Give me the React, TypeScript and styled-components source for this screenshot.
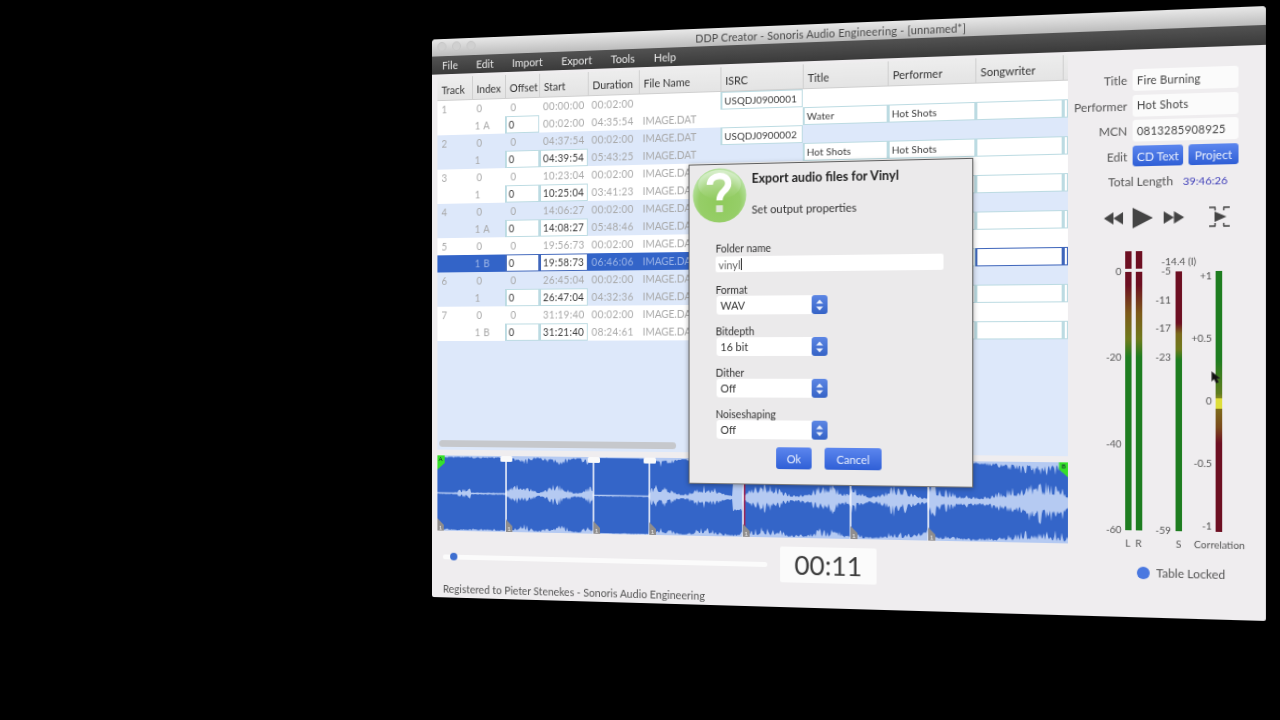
import React from "react";
import styled, { createGlobalStyle } from "styled-components";

const WIN_W = 836;
const WIN_H = 586;

// the whole window is a flat page, tilted onto this quad of the screen
function quadMatrix(w: number, h: number, q: number[][]) {
  const [[x0, y0], [x1, y1], [x2, y2], [x3, y3]] = q;
  const dx1 = x1 - x2, dx2 = x3 - x2, sx = x0 - x1 + x2 - x3;
  const dy1 = y1 - y2, dy2 = y3 - y2, sy = y0 - y1 + y2 - y3;
  const den = dx1 * dy2 - dx2 * dy1;
  const g = (sx * dy2 - dx2 * sy) / den;
  const k = (dx1 * sy - sx * dy1) / den;
  const a = x1 - x0 + g * x1, b = x3 - x0 + k * x3;
  const d = y1 - y0 + g * y1, e = y3 - y0 + k * y3;
  return `matrix3d(${[a / w, d / w, 0, g / w, b / h, e / h, 0, k / h, 0, 0, 1, 0, x0, y0, 0, 1]
    .map((n) => n.toFixed(7))
    .join(",")})`;
}

const TILT = quadMatrix(WIN_W, WIN_H, [[432, 39.5], [1266, 6], [1266, 621], [432, 597]]);
const FONT = `Lato, "Noto Sans", sans-serif`;
const COLUMNS = "38.5px 36px 37px 52px 54px 85px 84px 85px 86px 84px 5px";

const Global = createGlobalStyle`
  html, body { margin: 0; height: 100%; background: #000; overflow: hidden; }
  #root { height: 100%; }
`;

const Page = styled.div`
  width: 1280px;
  height: 720px;
  background: #000;
  overflow: hidden;
`;

const AppWindow = styled.div`
  position: relative;
  width: ${WIN_W}px;
  height: ${WIN_H}px;
  transform-origin: 0 0;
  transform: ${TILT};
  background: #efedef;
  border-radius: 4px 4px 2px 2px;
  overflow: hidden;
  display: flex;
  flex-direction: column;
  font-family: ${FONT};
  color: #444;
  filter: blur(0.3px);
`;

const TitleBar = styled.div`
  position: relative;
  height: 18px;
  background: linear-gradient(#e8e8e8, #bcbcbc);
  display: flex;
  align-items: center;
  justify-content: center;
  font-size: 11px;
  color: #4a4a4a;
  letter-spacing: 0.15px;
`;

const Lights = styled.div`
  position: absolute;
  left: 6px;
  top: 3px;
  display: flex;
  gap: 6px;
`;

const Light = styled.span`
  width: 10px;
  height: 10px;
  border-radius: 50%;
  background: #d0d0d0;
  border: 1px solid #c6c6c6;
  box-sizing: border-box;
`;

const MenuBar = styled.div`
  height: 19px;
  background: linear-gradient(#525252, #3a3a3a);
  display: flex;
  align-items: center;
  gap: 20px;
  padding-left: 11px;
  font-size: 11.2px;
  color: #e8e8e8;
`;

const Body = styled.div`
  flex: 1;
  display: flex;
  min-height: 0;
`;

const LeftColumn = styled.div`
  width: 652px;
  padding: 3px 0 0 5.5px;
  box-sizing: border-box;
  display: flex;
  flex-direction: column;
`;

const TablePane = styled.div`
  position: relative;
  height: 391px;
  background: #dde8fa;
`;

const HeaderRow = styled.div`
  display: grid;
  grid-template-columns: ${COLUMNS};
  height: 25px;
  background: linear-gradient(#ededed, #e4e4e4);
  border-bottom: 1px solid #cfcfcf;
  box-sizing: border-box;
`;

const HeaderCell = styled.div`
  display: flex;
  align-items: center;
  padding: 3px 0 0 4px;
  font-size: 11px;
  color: #333;
  border-left: 1px solid #cfcfcf;
  &:first-child { border-left: 0; padding-left: 5px; }
`;

const Row = styled.div<{ $tone: "white" | "blue" }>`
  display: grid;
  grid-template-columns: ${COLUMNS};
  height: 18px;
  background: ${(p) => (p.$tone === "white" ? "#fff" : "#dde8fa")};
`;

const Cell = styled.div<{ $selected?: boolean; $indent?: number; $name?: boolean }>`
  display: flex;
  align-items: center;
  padding-left: ${(p) => p.$indent ?? 4}px;
  font-size: 10.5px;
  letter-spacing: ${(p) => (p.$name ? 0 : 0.35)}px;
  color: #a8a8a8;
  white-space: nowrap;
  overflow: hidden;
  ${(p) => p.$selected && "background: #3364c8; color: #9db5e6;"}
`;

const Box = styled.div<{ $selected?: boolean; $code?: boolean }>`
  display: flex;
  align-items: center;
  padding-left: 2px;
  font-size: ${(p) => (p.$code ? 10 : 10.5)}px;
  letter-spacing: ${(p) => (p.$code ? 0.1 : 0.3)}px;
  color: #3a3a3a;
  background: #fff;
  white-space: nowrap;
  border: 1px solid ${(p) => (p.$selected ? "#3f66bb" : "#bcdbe2")};
  border-left-width: 2px;
  box-sizing: border-box;
`;

const Scrollbar = styled.div`
  position: absolute;
  left: 2px;
  top: 381px;
  width: 254px;
  height: 7px;
  border-radius: 4px;
  background: #c6c8cc;
`;

const WaveWrap = styled.div`
  margin-top: 6px;
  height: 79px;
`;

const WaveSvg = styled.svg`
  display: block;
  width: 646.5px;
  height: 79px;
`;

const TimeRow = styled.div`
  margin-top: 9px;
  display: flex;
  align-items: center;
  padding-left: 6.5px;
  gap: 13px;
`;

const Slider = styled.div`
  position: relative;
  width: 344px;
  height: 5px;
  border-radius: 3px;
  background: #fbfbfb;
`;

const Thumb = styled.span`
  position: absolute;
  left: 8px;
  top: -1.5px;
  width: 8px;
  height: 8px;
  border-radius: 50%;
  background: #3e6fd0;
`;

const TimeBox = styled.div`
  width: 97px;
  height: 36px;
  background: #fbfbfb;
  border-radius: 2px;
  display: flex;
  align-items: center;
  justify-content: center;
  font-size: 26.5px;
  color: #3c3c3c;
`;

const StatusText = styled.div`
  margin-top: 9px;
  padding-left: 6.5px;
  font-size: 11.1px;
  color: #555;
`;

const SidePanel = styled.div`
  flex: 1;
  padding-top: 19px;
  display: flex;
  flex-direction: column;
`;

const FormGrid = styled.div`
  display: grid;
  grid-template-columns: 56px 98px;
  column-gap: 5px;
  row-gap: 3.5px;
  grid-auto-rows: 21px;
  align-items: center;
`;

const FormLabel = styled.div`
  text-align: right;
  font-size: 11.3px;
  color: #555;
  white-space: nowrap;
`;

const FormInput = styled.div`
  height: 21px;
  background: #fbfbfb;
  border-radius: 3px;
  display: flex;
  align-items: center;
  padding-left: 4px;
  font-size: 10.5px;
  letter-spacing: 0.25px;
  color: #444;
`;

const EditButtons = styled.div`
  display: flex;
  gap: 5px;
`;

const BlueButton = styled.div<{ $w: number; $h: number }>`
  width: ${(p) => p.$w}px;
  height: ${(p) => p.$h}px;
  border-radius: 3px;
  background: linear-gradient(#5c86ee, #2f5fd6);
  color: #e9effd;
  font-size: 11.2px;
  display: flex;
  align-items: center;
  justify-content: center;
`;

const TotalRow = styled.div`
  margin-top: 7px;
  padding-left: 38px;
  display: flex;
  gap: 9px;
  font-size: 11.3px;
  color: #555;
`;

const TotalValue = styled.span`
  color: #3b3bb8;
  font-size: 10.4px;
  line-height: 14px;
`;

const Transport = styled.div`
  margin-top: 18px;
  padding-left: 34px;
  display: flex;
  align-items: center;
  height: 20px;
  color: #444;
`;

const TransportIcon = styled.svg<{ $gap: number }>`
  margin-left: ${(p) => p.$gap}px;
  fill: currentColor;
  display: block;
`;

const MeterRow = styled.div`
  margin-top: 22.5px;
  padding-left: 28.5px;
  display: flex;
  align-items: flex-start;
`;

const ScaleColumn = styled.div<{ $w: number; $gap: number; $inset?: boolean }>`
  width: ${(p) => p.$w}px;
  margin-right: ${(p) => p.$gap}px;
  height: ${(p) => (p.$inset ? 250 : 260)}px;
  margin-top: ${(p) => (p.$inset ? 20 : 15)}px;
  display: flex;
  flex-direction: column;
  justify-content: space-between;
  align-items: flex-end;
  font-size: 9.5px;
  line-height: 10px;
  color: #555;
`;

const ScaleStackEnd = styled.span`
  margin-top: auto;
`;

const ScaleStack = styled.span`
  height: 27.5px;
`;

const MeterColumn = styled.div<{ $offset?: number }>`
  width: 6px;
  margin-left: ${(p) => p.$offset ?? 0}px;
  display: flex;
  flex-direction: column;
  align-items: center;
  font-size: 9.5px;
  color: #555;
  white-space: nowrap;
`;

const MeterHead = styled.div`
  height: 20px;
  display: flex;
  align-items: center;
`;

const ClipBox = styled.div`
  width: 6px;
  height: 16.5px;
  margin-bottom: 3.5px;
  background: #6d0f22;
`;

const Bar = styled.div<{ $fill: string }>`
  width: 6px;
  height: 250px;
  background: ${(p) => p.$fill};
`;

const MeterFoot = styled.div`
  margin-top: 8px;
  line-height: 10px;
`;

const LockRow = styled.div`
  margin-top: 16px;
  padding-left: 65px;
  display: flex;
  align-items: center;
  gap: 6px;
  font-size: 11.3px;
  color: #555;
`;

const LockDot = styled.span`
  width: 12px;
  height: 12px;
  border-radius: 50%;
  background: #4a78e0;
`;

const Cursor = styled.svg`
  position: absolute;
  left: 785.5px;
  top: 348px;
`;

const Dialog = styled.div`
  position: absolute;
  left: 275px;
  top: 138px;
  width: 286px;
  height: 325px;
  box-sizing: border-box;
  background: #ebeaeb;
  border: 1px solid #5f5f5f;
  border-bottom-color: #777;
  box-shadow: 0 1px 5px rgba(0, 0, 0, 0.35);
  padding: 3px 0 0 3px;
  display: flex;
  flex-direction: column;
`;

const DialogHead = styled.div`
  display: flex;
  height: 56px;
`;

const DialogHeadText = styled.div`
  margin-left: 5px;
  display: flex;
  flex-direction: column;
  padding-top: 4px;
`;

const DialogTitle = styled.div`
  font-size: 12.6px;
  font-weight: 700;
  color: #222;
  line-height: 16px;
`;

const DialogSub = styled.div`
  margin-top: 15px;
  font-size: 11.3px;
  color: #333;
  line-height: 16px;
`;

const FieldList = styled.div`
  margin: 21px 0 0 24px;
  display: flex;
  flex-direction: column;
`;

const Field = styled.div`
  height: 42px;
  display: flex;
  flex-direction: column;
`;

const FieldLabel = styled.div`
  font-size: 10.5px;
  line-height: 11px;
  color: #333;
`;

const TextInput = styled.div`
  margin-top: 2px;
  width: 229px;
  height: 16px;
  background: #fff;
  border-radius: 2px;
  display: flex;
  align-items: center;
  padding-left: 3px;
  box-sizing: border-box;
  font-size: 11px;
  color: #666;
`;

const Caret = styled.span`
  width: 1px;
  height: 12px;
  background: #222;
`;

const SelectBox = styled.div`
  margin: 0 0 0 1px;
  width: 113px;
  height: 19px;
  background: #fff;
  border-radius: 3px;
  display: flex;
  align-items: center;
  justify-content: space-between;
  padding-left: 4px;
  box-sizing: border-box;
  font-size: 11px;
  color: #333;
`;

const Stepper = styled.span`
  width: 16px;
  height: 19px;
  border-radius: 3px;
  background: linear-gradient(#5c86e4, #3563c6);
  display: flex;
  align-items: center;
  justify-content: center;
`;

const DialogButtons = styled.div`
  margin: -4px 0 0 86px;
  display: flex;
  gap: 13px;
`;

type TrackRow = {
  track: string;
  startA: string;
  lenA: string;
  fileA: string;
  isrc?: string;
  index: string;
  startB: string;
  lenB: string;
  title?: string;
  performer?: string;
};

const TRACKS: TrackRow[] = [
  { track: "1", startA: "00:00:00", lenA: "00:02:00", fileA: "", isrc: "USQDJ0900001", index: "1 A", startB: "00:02:00", lenB: "04:35:54", title: "Water", performer: "Hot Shots" },
  { track: "2", startA: "04:37:54", lenA: "00:02:00", fileA: "IMAGE.DAT", isrc: "USQDJ0900002", index: "1", startB: "04:39:54", lenB: "05:43:25", title: "Hot Shots", performer: "Hot Shots" },
  { track: "3", startA: "10:23:04", lenA: "00:02:00", fileA: "IMAGE.DAT", index: "1", startB: "10:25:04", lenB: "03:41:23" },
  { track: "4", startA: "14:06:27", lenA: "00:02:00", fileA: "IMAGE.DAT", index: "1 A", startB: "14:08:27", lenB: "05:48:46" },
  { track: "5", startA: "19:56:73", lenA: "00:02:00", fileA: "IMAGE.DAT", index: "1 B", startB: "19:58:73", lenB: "06:46:06" },
  { track: "6", startA: "26:45:04", lenA: "00:02:00", fileA: "IMAGE.DAT", index: "1", startB: "26:47:04", lenB: "04:32:36" },
  { track: "7", startA: "31:19:40", lenA: "00:02:00", fileA: "IMAGE.DAT", index: "1 B", startB: "31:21:40", lenB: "08:24:61" },
];

const HEADERS = ["Track", "Index", "Offset", "Start", "Duration", "File Name", "ISRC", "Title", "Performer", "Songwriter", ""];

function TrackRows({ t, n }: { t: TrackRow; n: number }) {
  const tone = n % 2 === 0 ? "white" : "blue";
  const selected = n === 4;
  return (
    <>
      <Row $tone={tone}>
        <Cell $indent={5}>{t.track}</Cell>
        <Cell $indent={5}>0</Cell>
        <Cell $indent={6}>0</Cell>
        <Cell>{t.startA}</Cell>
        <Cell>{t.lenA}</Cell>
        <Cell $name>{t.fileA}</Cell>
        {t.isrc ? <Box $code>{t.isrc}</Box> : <Cell />}
      </Row>
      <Row $tone={tone}>
        <Cell $selected={selected} />
        <Cell $selected={selected} $indent={3}>{t.index}</Cell>
        <Box $selected={selected}>0</Box>
        {n === 0 ? <Cell>{t.startB}</Cell> : <Box $selected={selected}>{t.startB}</Box>}
        <Cell $selected={selected}>{t.lenB}</Cell>
        <Cell $selected={selected} $name>IMAGE.DAT</Cell>
        <Cell $selected={selected} />
        <Box $code>{t.title}</Box>
        <Box $code>{t.performer}</Box>
        <Box $selected={selected} />
        <Box $selected={selected} />
      </Row>
    </>
  );
}

// waveform: light peaks behind two dark lobes, noise is seeded so it stays put
type Seg = { x0: number; x1: number; outer: number; center: number; freq: number };

const SEGMENTS: Seg[] = [
  { x0: 0, x1: 75, outer: 2.5, center: 0.3, freq: 0.03 },
  { x0: 75, x1: 169, outer: 11, center: 11, freq: 0.16 },
  { x0: 169, x1: 228, outer: 1.2, center: 0.3, freq: 0.03 },
  { x0: 228, x1: 325, outer: 9, center: 13, freq: 0.13 },
  { x0: 325, x1: 434, outer: 11, center: 15, freq: 0.1 },
  { x0: 434, x1: 511, outer: 10, center: 15, freq: 0.12 },
  { x0: 511, x1: 647, outer: 13, center: 21, freq: 0.05 },
];

function buildWave() {
  let seed = 1234;
  const rnd = () => {
    seed = (seed * 16807) % 2147483647;
    return seed / 2147483647;
  };
  const mid = 39.5;
  const bottom = 79;
  const top: string[] = [];
  const topBack: string[] = [];
  const low: string[] = [];
  const lowBack: string[] = [];
  for (let x = 0; x <= 647; x += 1) {
    const s = SEGMENTS.find((g) => x < g.x1) ?? SEGMENTS[6];
    const wob = 0.6 + 0.4 * Math.sin(x * s.freq + s.x0);
    const r1 = rnd();
    const r2 = rnd();
    let o = 0.8 + s.outer * wob * (0.2 + 0.8 * r1 * r1);
    let c = 0.7 + s.center * wob * (0.3 + 0.7 * r2 * r2);
    if (s.x0 === 0 && x > 22 && x < 38) c = 1 + 4 * rnd();
    if (x > 314 && x < 325) c = 13 + 3 * r2;
    if (x > 490 && x < 511) o += (x - 490) * 0.35;
    top.push(`${x},${o.toFixed(1)}`);
    topBack.unshift(`${x},${(mid - c).toFixed(1)}`);
    low.push(`${x},${(mid + c * (0.7 + 0.5 * rnd())).toFixed(1)}`);
    lowBack.unshift(`${x},${(bottom - o * (0.6 + 0.5 * rnd())).toFixed(1)}`);
  }
  return {
    upper: `M${top.join("L")}L${topBack.join("L")}Z`,
    lower: `M${low.join("L")}L${lowBack.join("L")}Z`,
  };
}

const WAVE = buildWave();
const SPLITS = [0, 75, 169, 228, 325, 434, 511];

function Waveform() {
  return (
    <WaveSvg viewBox="0 0 646.5 79">
      <rect width="647" height="79" fill="#b5caf2" />
      <path d={WAVE.upper} fill="#3465c8" />
      <path d={WAVE.lower} fill="#3465c8" />
      {SPLITS.slice(1).map((x) => (
        <rect key={x} x={x - 0.7} y="0" width="1.6" height="79" fill="#f4f6fb" />
      ))}
      {[75, 169, 228].map((x) => (
        <rect key={x} x={x - 6} y="0" width="13" height="6" rx="1.5" fill="#fafafa" />
      ))}
      <rect x="326" y="0" width="1.5" height="74" fill="#a3204f" />
      {SPLITS.map((x) => (
        <g key={x}>
          <path d={`M${x} 79V66L${x + 7} 73V79Z`} fill="#8f8d8d" />
          <text x={x + 1.5} y="78" fontSize="6.5" fill="#eee" fontFamily={FONT}>1</text>
        </g>
      ))}
      <path d="M0 0H8V8L0 15Z" fill="#35e02a" />
      <text x="1.5" y="6" fontSize="6" fill="#113" fontFamily={FONT}>A</text>
      <path d="M637.5 0H646.5V15L637.5 7Z" fill="#35e02a" />
      <text x="640" y="6" fontSize="6" fill="#113" fontFamily={FONT}>B</text>
    </WaveSvg>
  );
}

function QuestionIcon() {
  return (
    <svg width="56" height="56" viewBox="0 0 56 56">
      <defs>
        <radialGradient id="qBall" cx="50%" cy="62%" r="55%">
          <stop offset="0%" stopColor="#8fca5c" />
          <stop offset="70%" stopColor="#96ce68" />
          <stop offset="100%" stopColor="#b4e09c" />
        </radialGradient>
        <linearGradient id="qGloss" x1="0" y1="0" x2="0" y2="1">
          <stop offset="0%" stopColor="#fff" stopOpacity="0.45" />
          <stop offset="100%" stopColor="#fff" stopOpacity="0" />
        </linearGradient>
      </defs>
      <circle cx="28" cy="28" r="27.5" fill="url(#qBall)" />
      <ellipse cx="28" cy="17" rx="22" ry="15" fill="url(#qGloss)" />
      <path d="M18 17C18 6 37 5 37 16C37 24 28 23 28 33" fill="none" stroke="#fff" strokeWidth="6.5" />
      <rect x="24.5" y="38" width="7" height="7" fill="#dfe6da" />
    </svg>
  );
}

function StepArrows() {
  return (
    <svg width="8" height="12" viewBox="0 0 8 12">
      <path d="M4 0.5L7.5 4.5H0.5Z" fill="#eaf0fc" />
      <path d="M4 11.5L7.5 7.5H0.5Z" fill="#eaf0fc" />
    </svg>
  );
}

const LR_FILL = "linear-gradient(#6d0f22 0%, #6d0f22 5%, #7d5a1a 16%, #6f7a1c 26%, #1e7d20 33%, #1e7d20 100%)";
const S_FILL = "linear-gradient(#6d0f22 0%, #6d0f22 20%, #7a6a1c 24%, #6f7a1c 30%, #1e7d20 34%, #1e7d20 100%)";
const CORR_FILL =
  "linear-gradient(#1e7d20 0%, #1e7d20 34%, #5f7c1e 47%, #8c8c20 49%, #dede3a 49%, #dede3a 53%, #7d6a1a 53%, #7a4a1c 60%, #6d0f22 66%, #6d0f22 100%)";

export default function App() {
  return (
    <Page>
      <Global />
      <AppWindow>
        <TitleBar>
          <Lights>
            <Light />
            <Light />
            <Light />
          </Lights>
          DDP Creator - Sonoris Audio Engineering - [unnamed*]
        </TitleBar>
        <MenuBar>
          <span>File</span>
          <span>Edit</span>
          <span>Import</span>
          <span>Export</span>
          <span>Tools</span>
          <span>Help</span>
        </MenuBar>
        <Body>
          <LeftColumn>
            <TablePane>
              <HeaderRow>
                {HEADERS.map((h, i) => (
                  <HeaderCell key={i}>{h}</HeaderCell>
                ))}
              </HeaderRow>
              {TRACKS.map((t, i) => (
                <TrackRows key={t.track} t={t} n={i} />
              ))}
              <Scrollbar />
            </TablePane>
            <WaveWrap>
              <Waveform />
            </WaveWrap>
            <TimeRow>
              <Slider>
                <Thumb />
              </Slider>
              <TimeBox>00:11</TimeBox>
            </TimeRow>
            <StatusText>Registered to Pieter Stenekes - Sonoris Audio Engineering</StatusText>
          </LeftColumn>
          <SidePanel>
            <FormGrid>
              <FormLabel>Title</FormLabel>
              <FormInput>Fire Burning</FormInput>
              <FormLabel>Performer</FormLabel>
              <FormInput>Hot Shots</FormInput>
              <FormLabel>MCN</FormLabel>
              <FormInput>0813285908925</FormInput>
              <FormLabel>Edit</FormLabel>
              <EditButtons>
                <BlueButton $w={47} $h={20}>CD Text</BlueButton>
                <BlueButton $w={46} $h={20}>Project</BlueButton>
              </EditButtons>
            </FormGrid>
            <TotalRow>
              <span>Total Length</span>
              <TotalValue>39:46:26</TotalValue>
            </TotalRow>
            <Transport>
              <TransportIcon $gap={0} width="18" height="12" viewBox="0 0 18 12">
                <path d="M9 0V12L0 6ZM18 0V12L9 6Z" />
              </TransportIcon>
              <TransportIcon $gap={9} width="19" height="20" viewBox="0 0 19 20">
                <path d="M0 0L19 10L0 20Z" />
              </TransportIcon>
              <TransportIcon $gap={10} width="19" height="12" viewBox="0 0 19 12">
                <path d="M0 0V12L9.5 6ZM9.5 0V12L19 6Z" />
              </TransportIcon>
              <TransportIcon $gap={22} width="21" height="20" viewBox="0 0 21 20">
                <path d="M6 5L17 10L6 15Z" />
                <path d="M1 1H7M14 1H20M1 19H7M14 19H20" stroke="#444" strokeWidth="1.3" fill="none" />
                <path d="M6.5 1V4M14.5 1V4M6.5 16V19M14.5 16V19" stroke="#444" strokeWidth="1.3" fill="none" />
              </TransportIcon>
            </Transport>
            <MeterRow>
              <ScaleColumn $w={22} $gap={3}>
                <span>0</span>
                <span>-20</span>
                <span>-40</span>
                <span>-60</span>
              </ScaleColumn>
              <MeterColumn>
                <ClipBox />
                <Bar $fill={LR_FILL} />
                <MeterFoot>L</MeterFoot>
              </MeterColumn>
              <MeterColumn $offset={4}>
                <ClipBox />
                <Bar $fill={LR_FILL} />
                <MeterFoot>R</MeterFoot>
              </MeterColumn>
              <ScaleColumn $w={27.4} $gap={4}>
                <ScaleStack>-5</ScaleStack>
                <ScaleStack>-11</ScaleStack>
                <ScaleStack>-17</ScaleStack>
                <ScaleStack>-23</ScaleStack>
                <ScaleStackEnd>-59</ScaleStackEnd>
              </ScaleColumn>
              <MeterColumn>
                <MeterHead>-14.4 (I)</MeterHead>
                <Bar $fill={S_FILL} />
                <MeterFoot>S</MeterFoot>
              </MeterColumn>
              <ScaleColumn $w={27.6} $gap={4} $inset>
                <span>+1</span>
                <span>+0.5</span>
                <span>0</span>
                <span>-0.5</span>
                <span>-1</span>
              </ScaleColumn>
              <MeterColumn>
                <MeterHead />
                <Bar $fill={CORR_FILL} />
                <MeterFoot>Correlation</MeterFoot>
              </MeterColumn>
            </MeterRow>
            <LockRow>
              <LockDot />
              Table Locked
            </LockRow>
          </SidePanel>
        </Body>

        <Dialog>
          <DialogHead>
            <QuestionIcon />
            <DialogHeadText>
              <DialogTitle>Export audio files for Vinyl</DialogTitle>
              <DialogSub>Set output properties</DialogSub>
            </DialogHeadText>
          </DialogHead>
          <FieldList>
            <Field>
              <FieldLabel>Folder name</FieldLabel>
              <TextInput>
                vinyl
                <Caret />
              </TextInput>
            </Field>
            {[
              ["Format", "WAV"],
              ["Bitdepth", "16 bit"],
              ["Dither", "Off"],
              ["Noiseshaping", "Off"],
            ].map(([label, value]) => (
              <Field key={label}>
                <FieldLabel>{label}</FieldLabel>
                <SelectBox>
                  {value}
                  <Stepper>
                    <StepArrows />
                  </Stepper>
                </SelectBox>
              </Field>
            ))}
          </FieldList>
          <DialogButtons>
            <BlueButton $w={36} $h={22}>Ok</BlueButton>
            <BlueButton $w={57} $h={22}>Cancel</BlueButton>
          </DialogButtons>
        </Dialog>

        <Cursor width="9" height="12" viewBox="0 0 10 13">
          <path d="M0.5 0.5V10.5L3 8.2L5 12.5L7.5 11.5L5.5 7.5H9Z" fill="#111" stroke="#333" strokeWidth="0.5" />
        </Cursor>
      </AppWindow>
    </Page>
  );
}
